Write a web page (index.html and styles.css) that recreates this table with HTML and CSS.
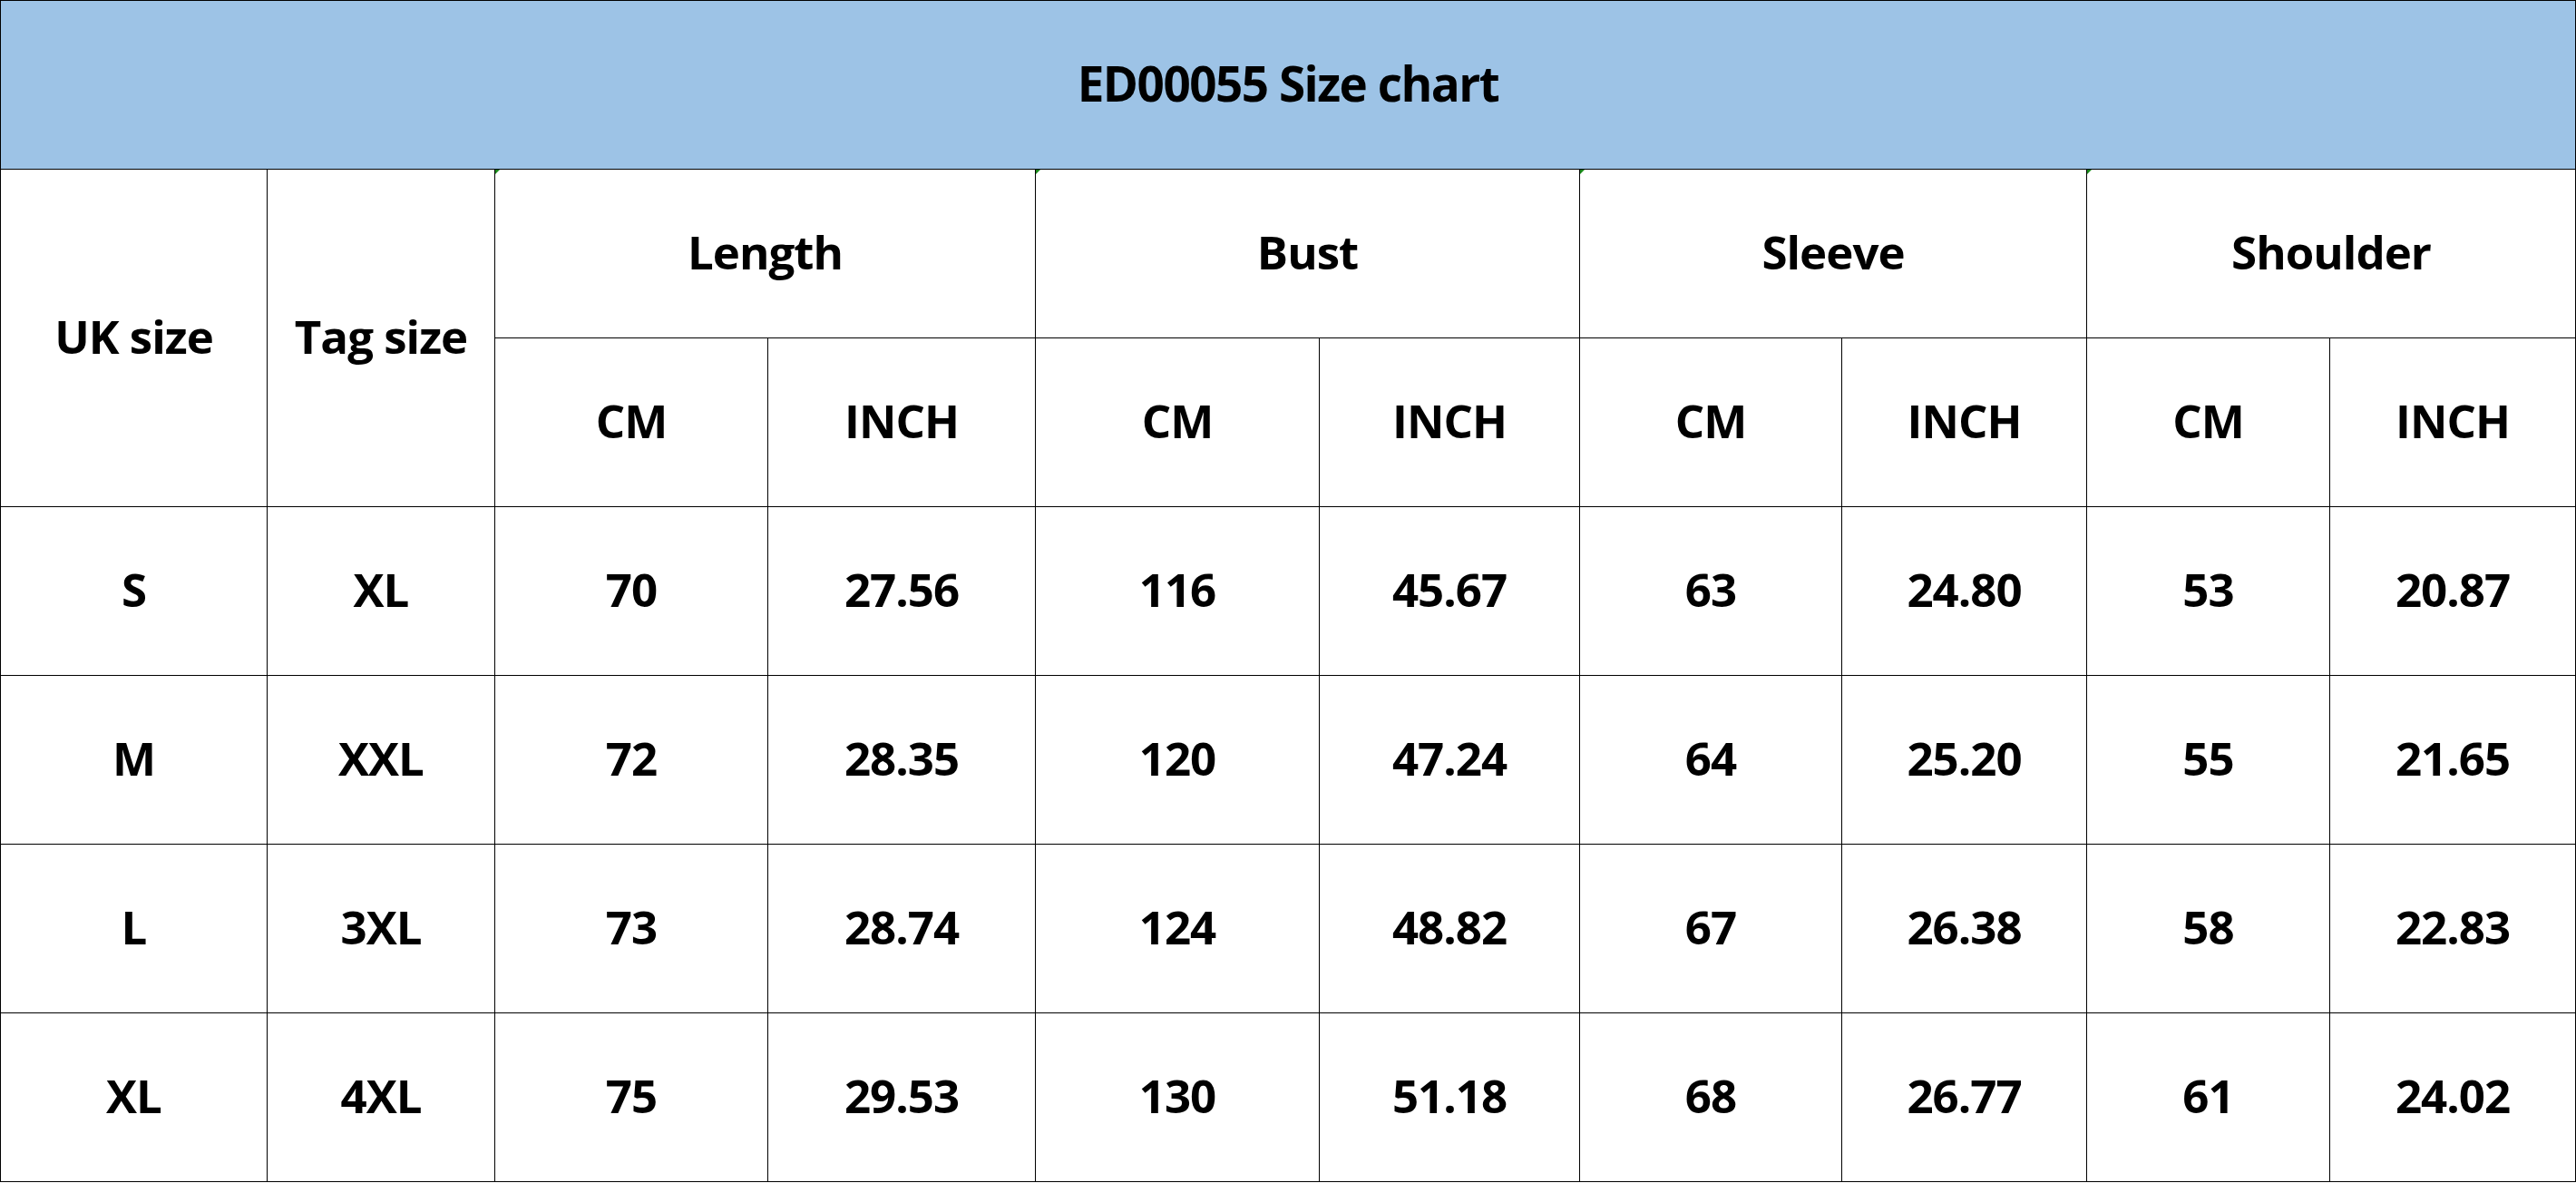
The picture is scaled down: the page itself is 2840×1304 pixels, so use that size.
FILE: index.html
```html
<!DOCTYPE html>
<html lang="en">
<head>
<meta charset="utf-8">
<title>ED00055 Size chart</title>
<link rel="stylesheet" href="styles.css">
</head>
<body>
<table class="chart">
  <colgroup>
    <col class="c-uk"><col class="c-tag">
    <col class="c-len-cm"><col class="c-len-in">
    <col class="c-bust-cm"><col class="c-bust-in">
    <col class="c-slv-cm"><col class="c-slv-in">
    <col class="c-sh-cm"><col class="c-sh-in">
  </colgroup>
  <tr class="title-row"><td colspan="10" class="title">ED00055 Size chart</td></tr>
  <tr>
    <td rowspan="2">UK size</td>
    <td rowspan="2">Tag size</td>
    <td colspan="2" class="flag">Length</td>
    <td colspan="2" class="flag">Bust</td>
    <td colspan="2" class="flag">Sleeve</td>
    <td colspan="2" class="flag">Shoulder</td>
  </tr>
  <tr>
    <td>CM</td><td>INCH</td><td>CM</td><td>INCH</td><td>CM</td><td>INCH</td><td>CM</td><td>INCH</td>
  </tr>
  <tr><td>S</td><td>XL</td><td>70</td><td>27.56</td><td>116</td><td>45.67</td><td>63</td><td>24.80</td><td>53</td><td>20.87</td></tr>
  <tr><td>M</td><td>XXL</td><td>72</td><td>28.35</td><td>120</td><td>47.24</td><td>64</td><td>25.20</td><td>55</td><td>21.65</td></tr>
  <tr><td>L</td><td>3XL</td><td>73</td><td>28.74</td><td>124</td><td>48.82</td><td>67</td><td>26.38</td><td>58</td><td>22.83</td></tr>
  <tr><td>XL</td><td>4XL</td><td>75</td><td>29.53</td><td>130</td><td>51.18</td><td>68</td><td>26.77</td><td>61</td><td>24.02</td></tr>
</table>
</body>
</html>
```
FILE: styles.css
```css
html, body {
  margin: 0;
  padding: 0;
  background: #ffffff;
}
.chart {
  border-collapse: collapse;
  table-layout: fixed;
  width: 2839px;
  font-family: "Open Sans", "Noto Sans", sans-serif;
  font-weight: 700;
  font-size: 51px;
  letter-spacing: -1px;
  color: #000000;
}
.c-uk { width: 294px; }
.c-tag { width: 251px; }
.c-len-cm { width: 301px; }
.c-len-in { width: 295px; }
.c-bust-cm { width: 313px; }
.c-bust-in { width: 287px; }
.c-slv-cm { width: 289px; }
.c-slv-in { width: 270px; }
.c-sh-cm { width: 268px; }
.c-sh-in { width: 271px; }
.chart tr { height: 186px; }
.chart td {
  border: 1px solid #000000;
  padding: 0 0 4px 0;
  text-align: center;
  vertical-align: middle;
  line-height: 1;
  white-space: nowrap;
  position: relative;
}
.title-row td.title {
  background: #9dc3e6;
  font-size: 53px;
  letter-spacing: -1.5px;
}
.flag::before {
  content: "";
  position: absolute;
  top: 0;
  left: 0;
  width: 0;
  height: 0;
  border-top: 5px solid #1a8a1a;
  border-right: 5px solid transparent;
}
```
